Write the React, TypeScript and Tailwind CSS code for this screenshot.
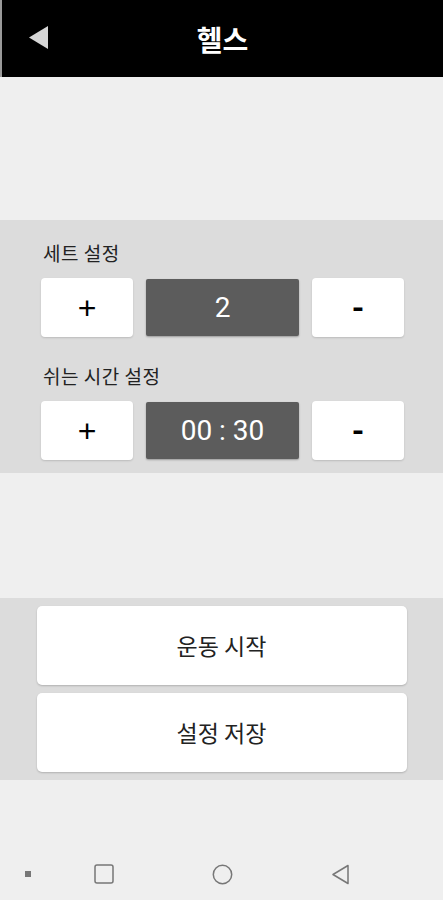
import React from "react";

const font = { fontFamily: '"Noto Sans CJK KR", "Noto Sans", sans-serif' };
const digits = { fontFamily: 'Roboto, "Liberation Sans", sans-serif' };
const signs = { fontFamily: '"Liberation Sans", Arial, sans-serif' };

interface StepperProps {
  label: string;
  value: string;
}

const Stepper = ({ label, value }: StepperProps) => {
  return (
    <div className="flex flex-col">
      <span className="ml-[43px] text-[19px] leading-[24px] tracking-[0.5px] text-[#222]">{label}</span>
      <div className="mt-[13px] flex items-center gap-[13px] pl-[41px]">
        <button
          className="flex h-[59px] w-[92px] items-center justify-center rounded-[4px] bg-white text-[32px] font-normal text-black shadow-[0_1px_2px_rgba(0,0,0,0.15)]"
          style={signs}
        >
          +
        </button>
        <div
          className="flex h-[57px] w-[153px] items-center justify-center rounded-[2px] bg-[#5c5c5c] text-[28px] whitespace-pre text-white shadow-[0_1px_2px_rgba(0,0,0,0.3)]"
          style={digits}
        >
          {value}
        </div>
        <button
          className="flex h-[59px] w-[92px] items-center justify-center rounded-[4px] bg-white text-[32px] font-bold text-black shadow-[0_1px_2px_rgba(0,0,0,0.15)]"
          style={digits}
        >
          -
        </button>
      </div>
    </div>
  );
};

const ActionButton = ({ label }: { label: string }) => (
  <button className="flex h-[79px] w-[370px] items-center justify-center rounded-[5px] bg-white text-[23px] text-[#222] shadow-[0_1px_2px_rgba(0,0,0,0.2)]">
    {label}
  </button>
);

export default function App() {
  return (
    <div className="flex h-[900px] w-[443px] flex-col bg-[#efefef]" style={font}>
      <header className="relative flex h-[77px] items-center justify-center border-l-2 border-[#9a9a9a] bg-black">
        <svg className="absolute left-[25px] top-[25px]" width="24" height="25" viewBox="0 0 24 25">
          <path d="M21 1 L2 12.5 L21 24 Z" fill="#d6d6d6" />
        </svg>
        <h1 className="text-[28px] font-bold text-white">헬스</h1>
      </header>

      <section className="mt-[143px] flex h-[253px] flex-col gap-[27px] bg-[#dcdcdc] pt-[21px]">
        <Stepper label="세트 설정" value="2" />
        <Stepper label="쉬는 시간 설정" value="00 : 30" />
      </section>

      <section className="mt-[125px] flex h-[182px] flex-col items-center gap-[8px] bg-[#dcdcdc] pt-[8px]">
        <ActionButton label="운동 시작" />
        <ActionButton label="설정 저장" />
      </section>

      <nav className="mt-auto flex h-[60px] items-center pt-[8px]">
        <div className="ml-[25px] h-[6px] w-[6px] bg-[#777]" />
        <svg className="ml-[63px]" width="20" height="20" viewBox="0 0 20 20">
          <rect x="1" y="1" width="18" height="18" rx="2" fill="none" stroke="#777" strokeWidth="1.5" />
        </svg>
        <svg className="ml-[98px]" width="21" height="21" viewBox="0 0 21 21">
          <circle cx="10.5" cy="10.5" r="9.2" fill="none" stroke="#777" strokeWidth="1.5" />
        </svg>
        <svg className="ml-[98px]" width="19" height="21" viewBox="0 0 19 21">
          <path d="M17 1.5 L2 10.5 L17 19.5 Z" fill="none" stroke="#777" strokeWidth="1.5" strokeLinejoin="round" />
        </svg>
      </nav>
    </div>
  );
}
